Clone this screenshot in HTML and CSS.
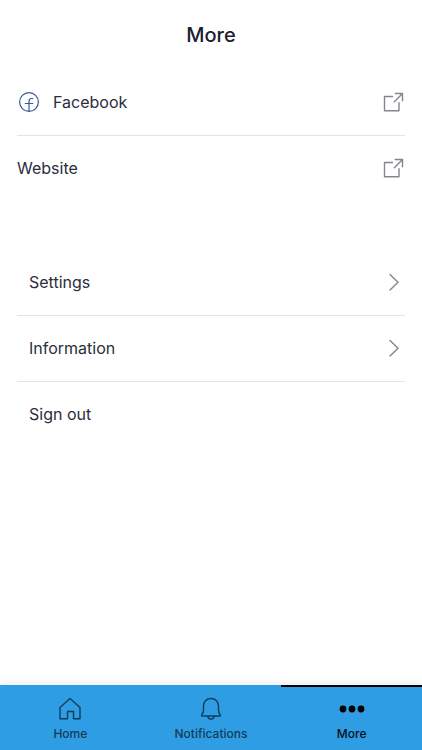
FILE: index.html
```html
<!DOCTYPE html>
<html lang="en">
<head>
<meta charset="utf-8">
<meta name="viewport" content="width=device-width, initial-scale=1">
<title>More</title>
<link rel="stylesheet" href="styles.css">
</head>
<body>
<header class="header"><h1 class="title">More</h1></header>
<main class="content">
  <ul class="list">
    <li class="item"><a class="row" href="#">
      <svg class="icon brand" viewBox="0 0 24 24" aria-hidden="true"><circle cx="12" cy="12" r="9.4"/><path d="M12 21.400V11.500c0-2 1-3 2.500-3h1.300M8.300 13.500h7.500"/></svg>
      <span class="label">Facebook</span>
      <svg class="icon" viewBox="0 0 24 24" aria-hidden="true"><path d="M11.500 6.500h-8v14.300H18v-8M13.300 11.800l8.200-8.200M14.300 3.500h7.200v7.200"/></svg>
    </a></li>
    <li class="item"><a class="row" href="#">
      <span class="label">Website</span>
      <svg class="icon" viewBox="0 0 24 24" aria-hidden="true"><path d="M11.500 6.500h-8v14.300H18v-8M13.300 11.800l8.200-8.200M14.300 3.500h7.200v7.200"/></svg>
    </a></li>
  </ul>
  <ul class="list">
    <li class="item"><a class="row inset" href="#">
      <span class="label">Settings</span>
      <svg class="icon" viewBox="0 0 24 24" aria-hidden="true"><path d="M9 4.500l8 7.800-8 7.800"/></svg>
    </a></li>
    <li class="item"><a class="row inset" href="#">
      <span class="label">Information</span>
      <svg class="icon" viewBox="0 0 24 24" aria-hidden="true"><path d="M9 4.500l8 7.800-8 7.800"/></svg>
    </a></li>
    <li class="item"><button class="row inset" type="button"><span class="label">Sign out</span></button></li>
  </ul>
</main>
<nav class="tabs" aria-label="Main">
  <a class="tab" href="#">
    <svg class="tab-icon" viewBox="0 0 24 24" aria-hidden="true"><path d="M2 10.500L12 1.500l10 9V21.700h-6.500v-7.200h-6v7.200H2z"/></svg>
    <span>Home</span>
  </a>
  <a class="tab" href="#">
    <svg class="tab-icon" viewBox="0 0 24 24" aria-hidden="true"><path d="M12 1.500c-4.600 0-7.500 3.200-7.500 7.500v4c0 2-.6 3.200-1.500 4.300-.7.800-.5 1.700.5 1.700h17c1 0 1.200-.9.500-1.700-.9-1.100-1.500-2.300-1.500-4.300V9c0-4.300-2.900-7.500-7.500-7.500zM8.700 19.200c.3 1.900 1.500 3 3.300 3s3-1.100 3.300-3"/></svg>
    <span>Notifications</span>
  </a>
  <a class="tab active" href="#" aria-current="page">
    <svg class="tab-icon dots" viewBox="0 0 24 24" aria-hidden="true"><circle cx="3" cy="12" r="3.400"/><circle cx="12" cy="12" r="3.400"/><circle cx="21" cy="12" r="3.400"/></svg>
    <span>More</span>
  </a>
</nav>
</body>
</html>
```
FILE: styles.css
```css
* {
  box-sizing: border-box;
}

body {
  display: flex;
  flex-direction: column;
  min-height: 100vh;
  margin: 0;
  background: #fff;
  color: #2b2e3b;
  font-family: Inter, "Liberation Sans", sans-serif;
}

.header {
  padding: 20px 16px;
  text-align: center;
}

.title {
  margin: 0;
  color: #1c2030;
  font-size: 20px;
  font-weight: 500;
  line-height: 30px;
}

.content {
  display: flex;
  flex: 1;
  flex-direction: column;
  gap: 48px;
  padding: 0 17px;
}

.list {
  margin: 0;
  padding: 0;
  list-style: none;
}

.item {
  border-bottom: 1px solid #e3e3e5;
}

.item:last-child {
  border-bottom-color: transparent;
}

.row {
  display: flex;
  align-items: center;
  gap: 12px;
  width: 100%;
  padding: 20px 0 21px;
  border: 0;
  background: none;
  color: inherit;
  font: inherit;
  font-size: 16px;
  line-height: 24px;
  text-align: left;
  text-decoration: none;
}

.inset {
  padding-left: 12px;
}

.label {
  flex: 1;
}

.icon {
  width: 24px;
  height: 24px;
  fill: none;
  stroke: #85868d;
  stroke-width: 1.4;
  stroke-linecap: round;
  stroke-linejoin: round;
}

.brand {
  stroke: #3b5998;
  stroke-width: 1.2;
}

.tabs {
  display: grid;
  grid-template-columns: repeat(3, 1fr);
  background: #2f9de4;
  box-shadow: 0 -2px 8px rgba(0, 0, 0, 0.08);
}

.tab {
  display: flex;
  flex-direction: column;
  align-items: center;
  gap: 4px;
  padding: 10px 0 7px;
  border-top: 2px solid transparent;
  color: #123c5a;
  font-size: 12px;
  font-weight: 500;
  line-height: 18px;
  text-decoration: none;
}

.active {
  border-top-color: #000;
  color: #051019;
}

.tab-icon {
  width: 24px;
  height: 24px;
  overflow: visible;
  fill: none;
  stroke: #123c5a;
  stroke-width: 1.4;
  stroke-linejoin: round;
}

.dots {
  fill: #000;
  stroke: none;
}
```
